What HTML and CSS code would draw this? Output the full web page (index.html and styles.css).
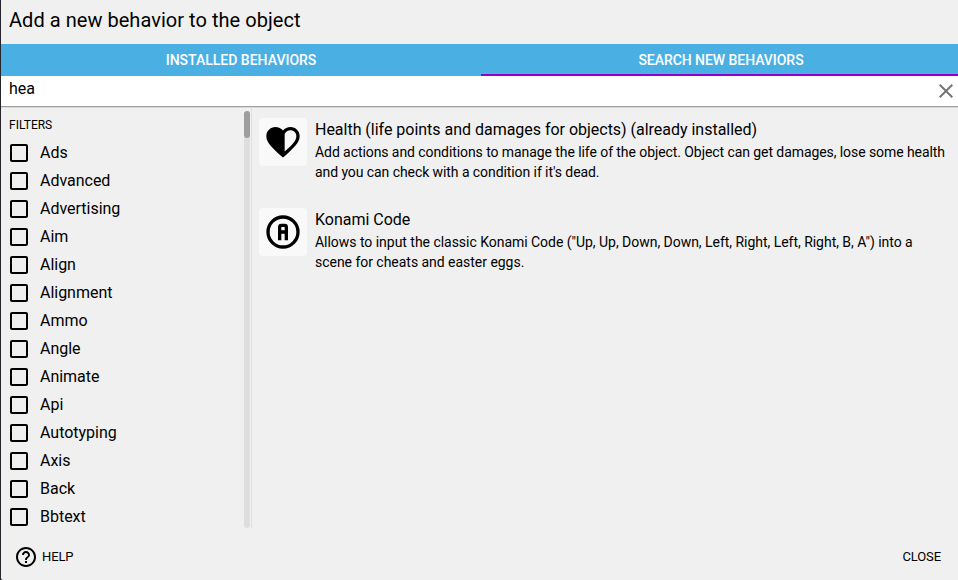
FILE: index.html
```
<!DOCTYPE html>
<html lang="en">
<head>
    <meta charset="UTF-8">
    <meta name="viewport" content="width=device-width, initial-scale=1.0">
    <title>Add a new behavior to the object</title>
    <link rel="stylesheet" href="styles.css">
</head>
<body>

    <div class="dialog">
        <h2 class="dialog-title">Add a new behavior to the object</h2>

        <div class="tabs">
            <button class="tab">Installed behaviors</button>
            <button class="tab active">Search new behaviors</button>
        </div>

        <div class="search-bar">
            <input class="search-input" type="text" value="hea" aria-label="Search">
            <svg class="clear-icon" viewBox="0 0 24 24"><path d="M19 6.41L17.59 5 12 10.59 6.41 5 5 6.41 10.59 12 5 17.59 6.41 19 12 13.41 17.59 19 19 17.59 13.41 12z"/></svg>
        </div>

        <div class="content">
            <div class="filters">
                <div class="filter-list" id="filterList">
                    <div class="filter-title">Filters</div>
                </div>
                <div class="scroll-track"><div class="scroll-thumb"></div></div>
            </div>

            <div class="results">
                <div class="result">
                    <div class="result-icon">
                        <svg viewBox="0 0 24 24"><path d="M16.5 5C15 5 13.58 5.91 13 7.2V17.74C17.25 13.87 20 11.2 20 8.5C20 6.5 18.5 5 16.5 5M16.5 3C19.58 3 22 5.41 22 8.5C22 12.27 18.6 15.36 13.45 20.03L12 21.35L10.55 20.03C5.4 15.36 2 12.27 2 8.5C2 5.41 4.42 3 7.5 3C9.24 3 10.91 3.81 12 5.08C13.09 3.81 14.76 3 16.5 3Z" fill-rule="evenodd"/></svg>
                    </div>
                    <div class="result-text">
                        <div class="result-name">Health (life points and damages for objects) (already installed)</div>
                        <div class="result-description compact">Add actions and conditions to manage the life of the object. Object can get damages, lose some health and you can check with a condition if it's dead.</div>
                    </div>
                </div>
                <div class="result">
                    <div class="result-icon">
                        <svg viewBox="0 0 24 24"><path d="M11 7H13A2 2 0 0 1 15 9V17H13V13H11V17H9V9A2 2 0 0 1 11 7M11 9V11H13V9H11M12 2A10 10 0 0 1 22 12A10 10 0 0 1 12 22A10 10 0 0 1 2 12A10 10 0 0 1 12 2M12 4A8 8 0 0 0 4 12A8 8 0 0 0 12 20A8 8 0 0 0 20 12A8 8 0 0 0 12 4Z" fill-rule="evenodd"/></svg>
                    </div>
                    <div class="result-text">
                        <div class="result-name">Konami Code</div>
                        <div class="result-description">Allows to input the classic Konami Code ("Up, Up, Down, Down, Left, Right, Left, Right, B, A") into a scene for cheats and easter eggs.</div>
                    </div>
                </div>
            </div>
        </div>

        <div class="actions">
            <button class="flat-button">
                <svg class="help-icon" viewBox="0 0 24 24"><path d="M11 18h2v-2h-2v2zm1-16C6.48 2 2 6.48 2 12s4.48 10 10 10 10-4.48 10-10S17.52 2 12 2zm0 18c-4.41 0-8-3.59-8-8s3.59-8 8-8 8 3.59 8 8-3.59 8-8 8zm0-14c-2.21 0-4 1.79-4 4h2c0-1.1.9-2 2-2s2 .9 2 2c0 2-3 1.75-3 5h2c0-2.25 3-2.5 3-5 0-2.21-1.79-4-4-4z"/></svg>
                <span>Help</span>
            </button>
            <button class="flat-button"><span>Close</span></button>
        </div>
    </div>

    <script>
        const filters = ['Ads', 'Advanced', 'Advertising', 'Aim', 'Align', 'Alignment', 'Ammo',
            'Angle', 'Animate', 'Api', 'Autotyping', 'Axis', 'Back', 'Bbtext'];
        const filterList = document.getElementById('filterList');

        filters.forEach(function (name) {
            const row = document.createElement('div');
            row.className = 'filter';
            row.innerHTML = `<svg class="checkbox" viewBox="0 0 24 24"><path d="M19 5v14H5V5h14m0-2H5c-1.1 0-2 .9-2 2v14c0 1.1.9 2 2 2h14c1.1 0 2-.9 2-2V5c0-1.1-.9-2-2-2z"/></svg><span class="filter-label">${name}</span>`;
            filterList.appendChild(row);
        });
    </script>

</body>
</html>
```
FILE: styles.css
```
* {
    box-sizing: border-box;
}

body {
    margin: 0;
    height: 100vh;
    overflow: hidden;
    font-family: Roboto, "Liberation Sans", sans-serif;
    color: #000;
    background-color: #25252b;
}

button {
    border: none;
    background: none;
    font-family: inherit;
    text-transform: uppercase;
    cursor: pointer;
}

.dialog {
    display: flex;
    flex-direction: column;
    height: 100vh;
    margin-left: 1px;
    background-color: #f0f0f0;
    border-bottom-left-radius: 2px;
}

.dialog-title {
    height: 44px;
    margin: 0;
    padding: 0 8px;
    font-size: 20px;
    font-weight: 400;
    letter-spacing: 0.04px;
    line-height: 40px;
}

/* Tabs */
.tabs {
    display: flex;
    height: 32px;
    background-color: #4ab0e4;
}

.tab {
    width: 480px;
    flex-shrink: 0;
    padding: 2px 0 0;
    border-bottom: 2px solid transparent;
    color: #fff;
    font-size: 14px;
    font-weight: 500;
}

.tab.active {
    border-bottom-color: #9100ce;
    letter-spacing: -0.05px;
}

/* Search bar */
.search-bar {
    display: flex;
    justify-content: space-between;
    height: 30px;
    padding: 0 2px 0 8px;
    background-color: #fff;
    box-shadow: 0 1px 0 #a0a0a0, 0 2px 0 #dadada;
    z-index: 1;
}

.search-input {
    flex: 1;
    height: 24px;
    padding: 0;
    border: none;
    outline: none;
    font-family: inherit;
    font-size: 16px;
}

.clear-icon {
    width: 24px;
    height: 24px;
    margin-top: 3px;
    margin-right: -2px;
    fill: #757575;
}

/* Content */
.content {
    display: flex;
    height: 422px;
}

.filters {
    display: flex;
    width: 251px;
    padding-top: 5px;
    border-right: 1px solid #e0e0e0;
}

.filter-list {
    flex: 1;
    padding: 5px 0 0 6px;
}

.filter-title {
    height: 23px;
    padding-left: 2px;
    font-size: 12px;
    line-height: 18px;
    text-transform: uppercase;
}

.filter {
    display: flex;
    align-items: center;
    height: 28px;
    font-size: 16px;
}

.filter-label {
    padding-bottom: 2px;
    letter-spacing: -0.02px;
}

.checkbox {
    width: 24px;
    height: 24px;
    margin-right: 9px;
}

.scroll-track {
    width: 6px;
    margin-right: 1px;
    border-radius: 3px;
    background-color: #dedede;
}

.scroll-thumb {
    height: 27px;
    border-radius: 3px;
    background-color: #9e9e9e;
}

.results {
    flex: 1;
    padding: 12px 8px 0 7px;
}

.result {
    display: flex;
    height: 90px;
}

.result-icon {
    width: 48px;
    height: 48px;
    flex-shrink: 0;
    margin-right: 8px;
    padding: 4px;
    border-radius: 4px;
    background-color: #f9f9f9;
}

.result-icon svg {
    display: block;
    width: 40px;
    height: 40px;
}

.result-name {
    height: 24px;
    font-size: 16px;
    letter-spacing: -0.02px;
    line-height: 24px;
}

.result-description {
    font-size: 14px;
    letter-spacing: -0.03px;
    line-height: 20px;
}

.result-description.compact {
    letter-spacing: -0.075px;
}

/* Bottom buttons */
.actions {
    display: flex;
    justify-content: space-between;
    padding: 11px 9px 0 5px;
}

.flat-button {
    display: flex;
    align-items: center;
    height: 36px;
    padding: 0 8px;
    color: #000;
    font-size: 13px;
    letter-spacing: -0.1px;
}

.flat-button span {
    padding-bottom: 2px;
}

.help-icon {
    width: 24px;
    height: 24px;
    margin-right: 4px;
}
```
